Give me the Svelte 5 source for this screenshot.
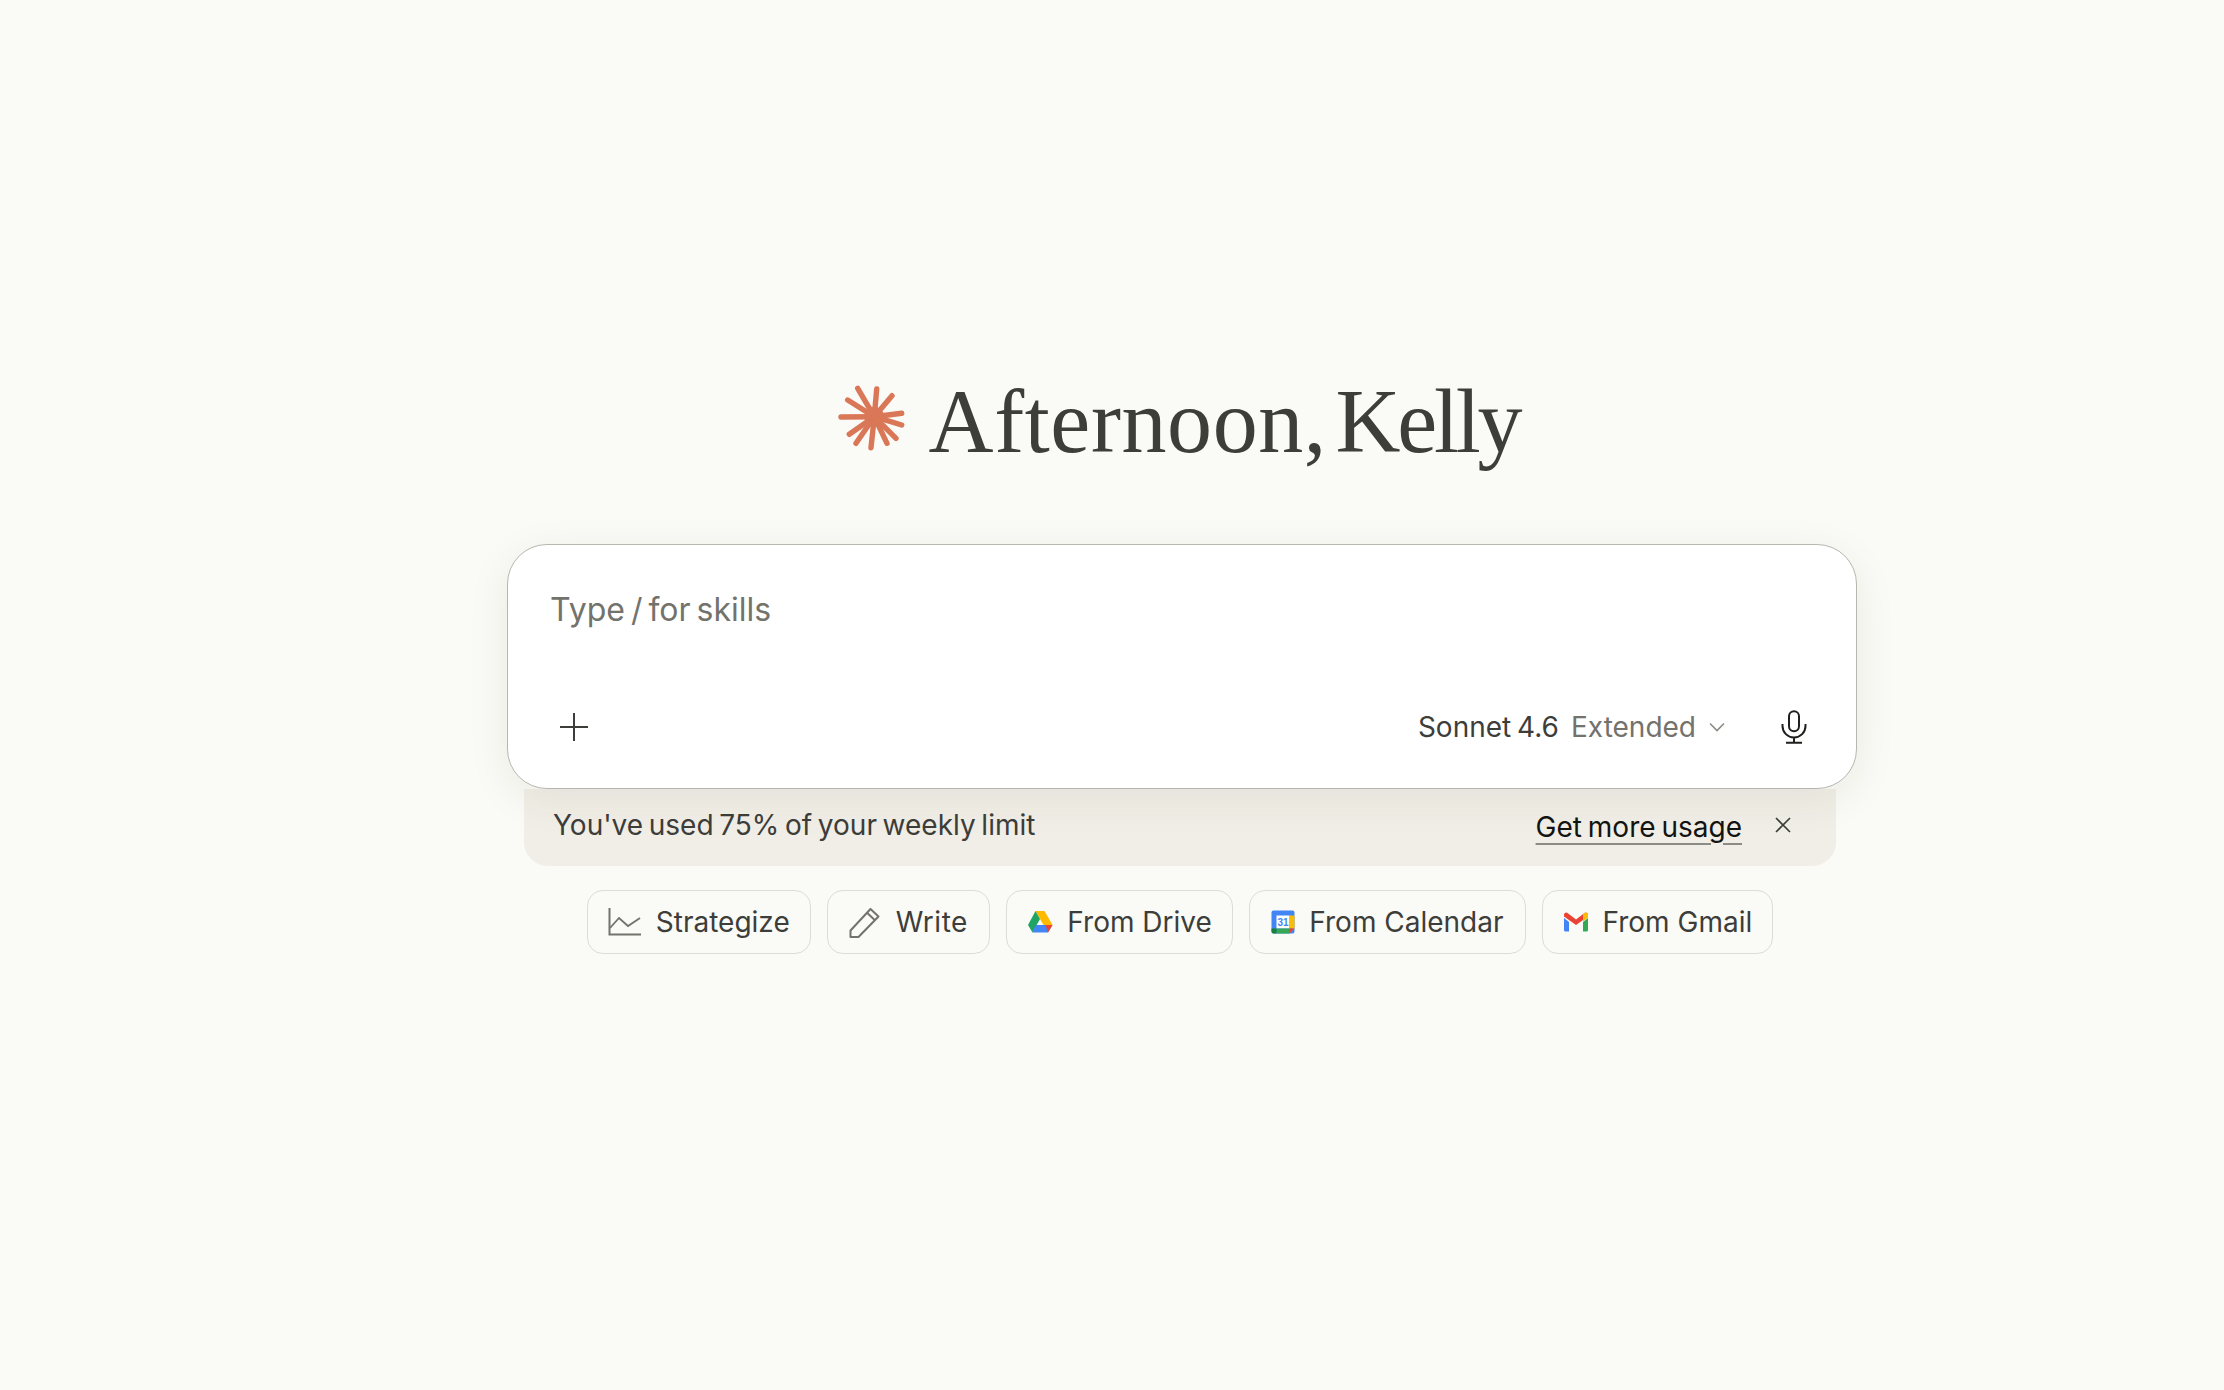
<script>
	const rays = [
		[26.7, 13.3], [45.7, 14], [61, 20.7], [16.7, 25], [10, 42], [70.7, 38.3],
		[70.7, 50], [18.3, 59.3], [25, 68.3], [40, 72.7], [56, 68.3], [65, 63.3]
	];
</script>

<main class="page">
	<div class="column">
		<h1 class="greeting">
			<svg class="spark" viewBox="0 0 80 80" aria-hidden="true">
				<circle cx="43.3" cy="41.7" r="10" fill="#d97757" />
				{#each rays as r}
					<line x1="43.3" y1="41.7" x2={r[0]} y2={r[1]} stroke="#d97757" stroke-width="5.4" stroke-linecap="round" />
				{/each}
			</svg>
			<span><span class="time">Afternoon,</span> <span class="who">Kelly</span></span>
		</h1>

		<div class="composer">
			<div class="placeholder">Type / for skills</div>
			<div class="toolbar">
				<svg class="plus" viewBox="0 0 30 30" aria-hidden="true">
					<path d="M15 1v28M1 15h28" fill="none" stroke="#3d3d3a" stroke-width="2" />
				</svg>
				<div class="model">
					<span class="name">Sonnet 4.6</span>
					<span class="mode">Extended</span>
					<svg class="chevron" viewBox="0 0 18 12" aria-hidden="true">
						<path d="M2 2.5l7 7 7-7" fill="none" stroke="#8c8b85" stroke-width="1.6" />
					</svg>
				</div>
				<svg class="mic" viewBox="0 0 26 34" aria-hidden="true">
					<rect x="8" y="1.2" width="10" height="20" rx="5" fill="none" stroke="#1f1f1d" stroke-width="2" />
					<path d="M1.5 14v2a11.500 11.500 0 0 0 23 0v-2M13 27.500v5M5 32.800h16" fill="none" stroke="#1f1f1d" stroke-width="2" />
				</svg>
			</div>
		</div>

		<div class="banner">
			<span class="usage">You've used 75% of your weekly limit</span>
			<span class="banner-right">
				<span class="link">Get more usage</span>
				<svg class="close" viewBox="0 0 18 18" aria-hidden="true">
					<path d="M2 2l14 14M16 2L2 16" fill="none" stroke="#3d3d3a" stroke-width="1.6" />
				</svg>
			</span>
		</div>

		<div class="chips">
			<button class="chip">
				<svg class="chart" viewBox="0 0 34 28" aria-hidden="true">
					<path d="M1.500 0v26.500H33" fill="none" stroke="#73726c" stroke-width="2" />
					<path d="M2 20l9-10 9 8 12-8" fill="none" stroke="#73726c" stroke-width="1.800" />
				</svg>
				Strategize
			</button>
			<button class="chip write">
				<svg class="pencil" viewBox="0 0 32 32" aria-hidden="true">
					<path d="M1.500 24.500L21.500 3l8 7.500-20 20.500H1.500zM18 6.800l8.500 8" fill="none" stroke="#73726c" stroke-width="2" stroke-linejoin="round" />
				</svg>
				Write
			</button>
			<button class="chip drive-chip">
				<svg class="drive" viewBox="0 0 26 24" aria-hidden="true">
					<path d="M8.500 1h9l8 14h-9z" fill="#ffba00" />
					<path d="M8.500 1l4.500 8-7.500 13.500L1 15z" fill="#1fa463" />
					<path d="M8.500 15h17l-4.500 7.500H5.500z" fill="#4285f4" />
					<path d="M18.500 15h7L21 22.500z" fill="#ea4335" />
				</svg>
				From Drive
			</button>
			<button class="chip wide">
				<svg class="calendar" viewBox="0 0 24 24" aria-hidden="true">
					<rect x="0.500" y="0.500" width="23" height="23" rx="2" fill="#4285f4" />
					<rect x="5.500" y="5.500" width="13" height="13" fill="#fff" />
					<rect x="18.500" y="5.500" width="5" height="13" fill="#fbbc04" />
					<rect x="5.500" y="18.500" width="13" height="5" fill="#34a853" />
					<path d="M0.500 18.500h5v5h-3a2 2 0 0 1-2-2z" fill="#188038" />
					<path d="M18.500 18.500h5l-5 5z" fill="#ea4335" />
					<text x="12" y="15.500" text-anchor="middle" class="cal-day">31</text>
				</svg>
				From Calendar
			</button>
			<button class="chip">
				<svg class="gmail" viewBox="0 0 26 20" aria-hidden="true">
					<path d="M1 4.500L13 13 25 4.500V2.500A2.200 2.200 0 0 0 21.500 1L13 7.500 4.500 1A2.200 2.200 0 0 0 1 2.500z" fill="#ea4335" />
					<path d="M1 6v12a1.500 1.500 0 0 0 1.500 1.500H6V10z" fill="#4285f4" />
					<path d="M20 10v9.500h3.500A1.500 1.500 0 0 0 25 18V6z" fill="#34a853" />
					<path d="M21.500 1A2.200 2.200 0 0 1 25 2.500v3l-5 4V2.200z" fill="#fbbc04" />
				</svg>
				From Gmail
			</button>
		</div>
	</div>
</main>

<style>
	:global(body) {
		background: #fafaf6;
		font-family: Inter, "Noto Sans", sans-serif;
	}

	.page {
		min-height: 1390px;
		box-sizing: border-box;
		padding: 366px 0 0 140px;
		display: flex;
		justify-content: center;
	}

	.column {
		width: 1350px;
		display: flex;
		flex-direction: column;
		align-items: center;
	}

	.greeting {
		margin: 0 4px 68px 0;
		height: 110px;
		display: flex;
		align-items: center;
		gap: 18px;
		font-family: "Liberation Serif", serif;
		font-weight: 400;
		font-size: 90px;
		word-spacing: -14px;
		color: #3d3d3a;
		white-space: nowrap;
	}

	.time {
		letter-spacing: 0.6px;
	}

	.who {
		letter-spacing: -3.2px;
	}

	.spark {
		width: 80px;
		height: 80px;
		margin: -12px 0 0 -10px;
	}

	.composer {
		position: relative;
		z-index: 1;
		width: 100%;
		height: 245px;
		box-sizing: border-box;
		padding: 45px 30px 0 42px;
		background: #fff;
		border: 1px solid #b8b6af;
		border-radius: 40px;
		box-shadow: 0 10px 44px rgba(60, 50, 30, 0.07);
		display: flex;
		flex-direction: column;
		justify-content: space-between;
	}

	.placeholder {
		font-size: 32px;
		line-height: 40px;
		word-spacing: -3px;
		color: #73726c;
	}

	.toolbar {
		display: flex;
		align-items: center;
		height: 44px;
		margin-bottom: 39px;
	}

	.plus {
		width: 30px;
		height: 30px;
		margin-left: 9px;
	}

	.model {
		margin-left: auto;
		display: flex;
		align-items: center;
		gap: 12px;
		font-size: 28px;
	}

	.name {
		color: #3d3d3a;
		word-spacing: -2px;
	}

	.mode {
		color: #73726c;
	}

	.chevron {
		width: 18px;
		height: 12px;
	}

	.mic {
		width: 26px;
		height: 34px;
		margin: 0 19px 0 55px;
	}

	.banner {
		width: 1312px;
		height: 77px;
		box-sizing: border-box;
		margin-right: 4px;
		padding: 0 44px 10px 29px;
		background: #f0eee6;
		border-radius: 0 0 24px 24px;
		display: flex;
		align-items: center;
		justify-content: space-between;
		font-size: 28px;
		color: #3d3d3a;
	}

	.usage {
		word-spacing: -2.2px;
		position: relative;
		top: 2px;
	}

	.banner-right {
		display: flex;
		align-items: center;
		gap: 32px;
	}

	.link {
		color: #141413;
		text-decoration: underline;
		text-decoration-color: #8c8b85;
		text-underline-offset: 6px;
		text-decoration-thickness: 2px;
		word-spacing: -2px;
		position: relative;
		top: 4px;
	}

	.close {
		width: 18px;
		height: 18px;
		position: relative;
		top: 2px;
	}

	.chips {
		margin: 24px 4px 0 0;
		display: flex;
		gap: 16px;
	}

	.chip {
		height: 64px;
		box-sizing: border-box;
		padding: 0 20px;
		background: transparent;
		border: 1.5px solid #dedcd5;
		border-radius: 16px;
		display: flex;
		align-items: center;
		gap: 14px;
		font: inherit;
		font-size: 28px;
		color: #3d3d3a;
		white-space: nowrap;
	}

	.chip.write {
		padding: 0 21px;
		gap: 15px;
		letter-spacing: 0.5px;
	}

	.chip.wide {
		padding: 0 21px;
	}

	.chip.drive-chip {
		padding: 0 20.500px;
	}

	.chart {
		width: 34px;
		height: 28px;
	}

	.pencil {
		width: 32px;
		height: 32px;
	}

	.drive {
		width: 26px;
		height: 24px;
	}

	.calendar {
		width: 24px;
		height: 24px;
	}

	.gmail {
		width: 26px;
		height: 20px;
	}

	.cal-day {
		font-family: "Liberation Sans", sans-serif;
		font-size: 10px;
		font-weight: 700;
		fill: #4285f4;
	}
</style>
